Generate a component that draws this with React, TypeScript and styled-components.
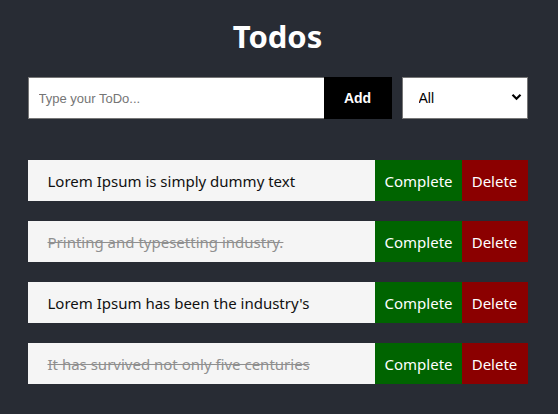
import React from "react";
import styled, { createGlobalStyle } from "styled-components";

const Global = createGlobalStyle`
  html, body { margin: 0; padding: 0; background: #282c34; }
  body { font-family: "Noto Sans", "Open Sans", sans-serif; }
  * { box-sizing: border-box; }
`;

const Page = styled.main`
  min-height: 414px;
  display: flex;
  flex-direction: column;
  align-items: center;
  padding: 0 3px 0 0;
`;

const Column = styled.div`
  width: 500px;
  display: flex;
  flex-direction: column;
`;

const Title = styled.h1`
  margin: 12px 0 0;
  height: 65px;
  text-align: center;
  color: #fff;
  font-size: 31px;
  font-weight: 700;
  line-height: 48px;
`;

const Form = styled.form`
  display: flex;
  align-items: stretch;
  gap: 10px;
  height: 42px;
`;

const InputGroup = styled.div`
  display: flex;
`;

const TextInput = styled.input`
  width: 296px;
  height: 42px;
  border: 1px solid #767676;
  border-right: none;
  padding: 0 10px;
  font-family: "Liberation Sans", Arial, sans-serif;
  font-size: 13px;
  color: #000;
  outline: none;
  &::placeholder { color: #757575; }
`;

const AddButton = styled.button`
  width: 68px;
  height: 42px;
  border: none;
  background: #000;
  color: #fff;
  font-family: "Liberation Sans", Arial, sans-serif;
  font-size: 14px;
  font-weight: 700;
  cursor: pointer;
`;

const SelectWrap = styled.div`
  position: relative;
  width: 126px;
  height: 42px;
`;

const Select = styled.select`
  appearance: none;
  width: 100%;
  height: 100%;
  border: 1px solid #767676;
  background: #fff;
  padding: 0 0 0 16px;
  font-family: "Liberation Sans", Arial, sans-serif;
  font-size: 14px;
  color: #000;
  outline: none;
`;

const Chevron = styled.svg`
  position: absolute;
  right: 6px;
  top: 16px;
  pointer-events: none;
`;

const List = styled.ul`
  list-style: none;
  margin: 41px 0 0;
  padding: 0;
  display: flex;
  flex-direction: column;
  gap: 20px;
`;

const Row = styled.li`
  display: flex;
  height: 41px;
  background: #f5f5f5;
`;

const Text = styled.span<{ $done?: boolean }>`
  flex: 1;
  display: flex;
  align-items: center;
  padding-left: 20px;
  font-size: 15px;
  color: ${(p) => (p.$done ? "#8f8f8f" : "#111")};
  text-decoration: ${(p) => (p.$done ? "line-through" : "none")};
`;

const ActionButton = styled.button<{ $kind: "complete" | "delete" }>`
  border: none;
  padding: 0 10px;
  width: ${(p) => (p.$kind === "complete" ? "87px" : "66px")};
  background: ${(p) => (p.$kind === "complete" ? "#006400" : "#8b0000")};
  color: #fff;
  font-family: "Noto Sans", "Open Sans", sans-serif;
  font-size: 15px;
  cursor: pointer;
`;

const todos = [
  { text: "Lorem Ipsum is simply dummy text", done: false },
  { text: "Printing and typesetting industry.", done: true },
  { text: "Lorem Ipsum has been the industry's", done: false },
  { text: "It has survived not only five centuries", done: true },
];

export default function App() {
  return (
    <>
      <Global />
      <Page>
        <Column>
          <Title>Todos</Title>
          <Form onSubmit={(e) => e.preventDefault()}>
            <InputGroup>
              <TextInput placeholder="Type your ToDo..." />
              <AddButton type="submit">Add</AddButton>
            </InputGroup>
            <SelectWrap>
              <Select defaultValue="all">
                <option value="all">All</option>
                <option value="completed">Completed</option>
                <option value="uncompleted">Uncompleted</option>
              </Select>
              <Chevron width="11" height="8" viewBox="0 0 11 8">
                <path d="M1.5 1.8 L5.5 5.8 L9.5 1.8" fill="none" stroke="#000" strokeWidth="2.2" />
              </Chevron>
            </SelectWrap>
          </Form>
          <List>
            {todos.map((t) => (
              <Row key={t.text}>
                <Text $done={t.done}>{t.text}</Text>
                <ActionButton $kind="complete">Complete</ActionButton>
                <ActionButton $kind="delete">Delete</ActionButton>
              </Row>
            ))}
          </List>
        </Column>
      </Page>
    </>
  );
}
